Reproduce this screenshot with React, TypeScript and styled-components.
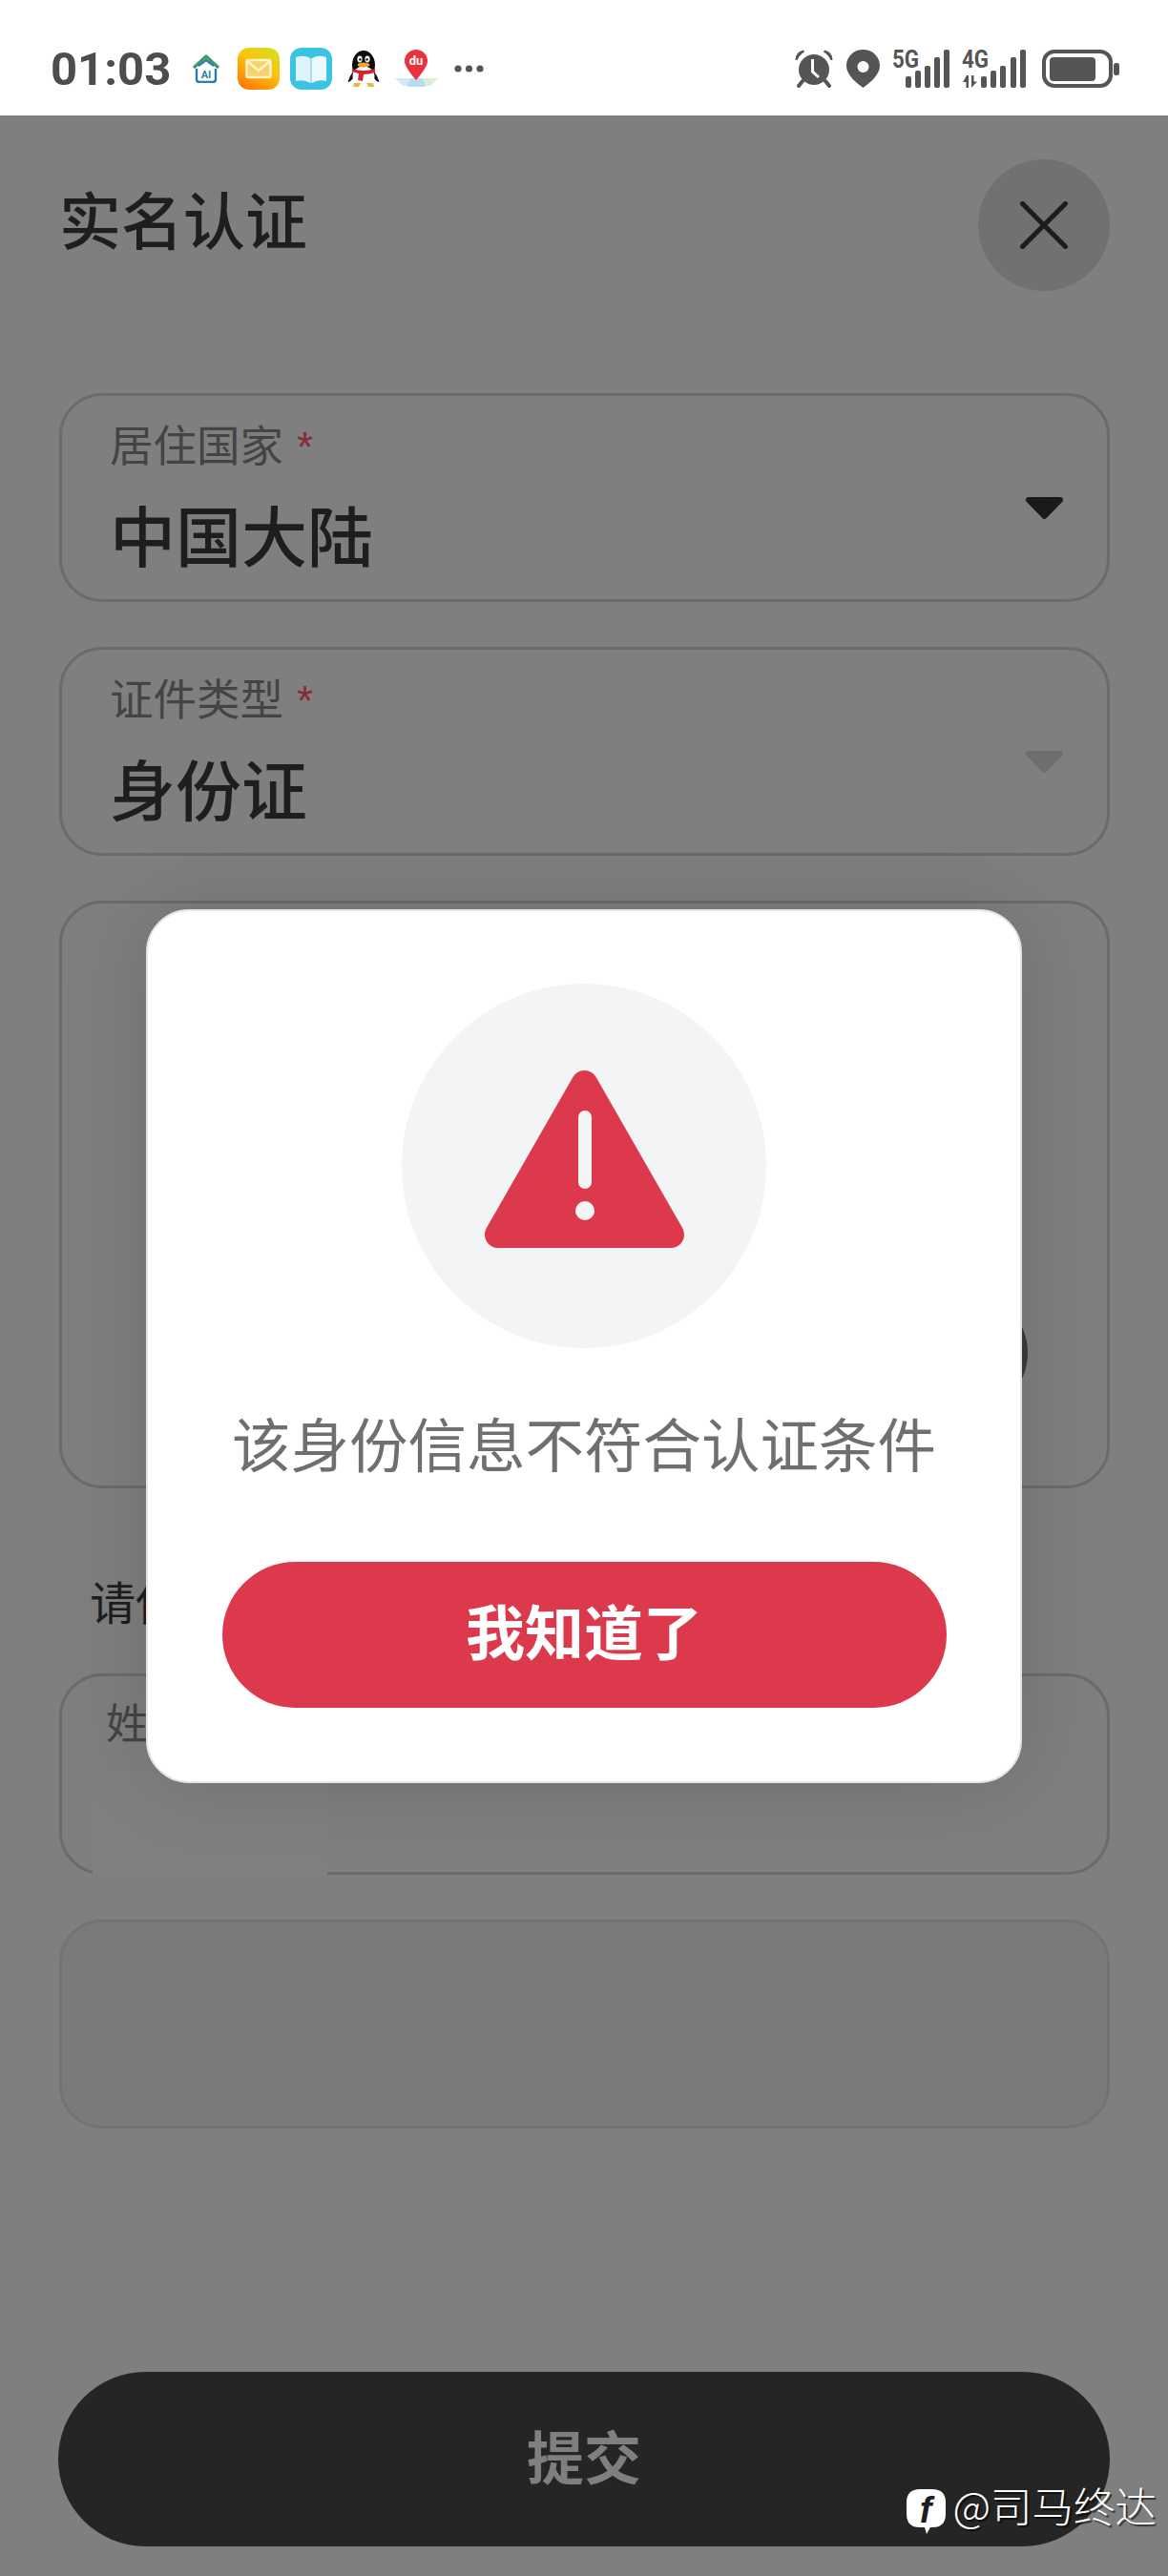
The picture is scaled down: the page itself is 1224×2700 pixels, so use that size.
import styled, { createGlobalStyle } from 'styled-components'

const GlobalStyle = createGlobalStyle`
  html, body {
    margin: 0;
    padding: 0;
    background: #7f7f7f;
    font-family: 'Noto Sans CJK SC', 'Noto Sans', sans-serif;
  }
  * {
    box-sizing: border-box;
  }
`

const StatusIcons = () => (
  <>
    <StatusGlyph $w={30} $gap={22} width="30" height="30" viewBox="0 0 30 30">
      <path d="M2 14 L15 2 L28 14" fill="none" stroke="#3f9a62" strokeWidth="3.2" strokeLinejoin="round" />
      <path d="M7 12 L15 6 L23 12" fill="none" stroke="#2f7fb0" strokeWidth="2.4" />
      <path d="M5 15 V26 Q5 29 8 29 H22 Q25 29 25 26 V15" fill="none" stroke="#2b7ea8" strokeWidth="2.4" />
      <text x="15" y="25" textAnchor="middle" fontFamily="Roboto, sans-serif" fontWeight="700" fontSize="11" fill="#2b7ea8">
        AI
      </text>
    </StatusGlyph>
    <StatusGlyph $w={44} $gap={18} width="44" height="44" viewBox="0 0 44 44">
      <defs>
        <linearGradient id="mailBg" x1="0.85" y1="0" x2="0.25" y2="1">
          <stop offset="0" stopColor="#d4df20" />
          <stop offset="0.45" stopColor="#fcc30c" />
          <stop offset="1" stopColor="#ff7a06" />
        </linearGradient>
      </defs>
      <rect width="44" height="44" rx="12" fill="url(#mailBg)" />
      <rect x="9.5" y="13" width="25" height="18" rx="1.5" fill="#f6d36a" stroke="#fff2c4" strokeWidth="2.6" />
      <path d="M10 14 L22 24 L34 14" fill="none" stroke="#fff2c4" strokeWidth="2.6" />
    </StatusGlyph>
    <StatusGlyph $w={44} $gap={11} width="44" height="44" viewBox="0 0 44 44">
      <rect width="44" height="44" rx="12" fill="#3bc3e3" />
      <path d="M6 10 Q15 7 21 11 V37 Q15 33 6 35 Z" fill="#dff3fb" />
      <path d="M38 10 Q29 7 23 11 V37 Q29 33 38 35 Z" fill="#eef9fd" />
      <path d="M21 11 H23 V37 H21 Z" fill="#a9def2" />
    </StatusGlyph>
    <StatusGlyph $w={34} $gap={16} width="34" height="39" viewBox="0 0 34 39">
      <path d="M6 22 Q2 27 0.5 33 Q3 33 6 29 Z M28 22 Q32 27 33.5 33 Q31 33 28 29 Z" fill="#111" />
      <ellipse cx="17" cy="15" rx="12" ry="15" fill="#0c0c0c" />
      <ellipse cx="17" cy="27" rx="11.5" ry="10.5" fill="#fff" />
      <path d="M7 34 H14 L12 38 H6 Z M20 34 H27 L28 38 H22 Z" fill="#e8b93c" />
      <ellipse cx="13" cy="9" rx="2.6" ry="3.4" fill="#fff" />
      <ellipse cx="21" cy="9" rx="2.6" ry="3.4" fill="#fff" />
      <circle cx="13.4" cy="9.4" r="1.2" fill="#000" />
      <circle cx="20.6" cy="9.4" r="1.2" fill="#000" />
      <ellipse cx="17" cy="15" rx="6.5" ry="2.6" fill="#f0a52c" />
      <path d="M5 19 Q17 23 29 19 L29 23 Q22 25 17 25 L16 32 L11 31 L12 24 Q8 23 5 22 Z" fill="#d8222c" />
    </StatusGlyph>
    <StatusGlyph $w={45} $gap={16} width="45" height="40" viewBox="0 0 45 40">
      <path d="M0 30 H15 L22 38 H8 Z" fill="#cfe9f6" />
      <path d="M30 30 H45 L37 38 H28 Z" fill="#dcefd6" />
      <path d="M16 30 H29 L32 39 H13 Z" fill="#b9dcf3" />
      <path d="M22 32 Q10 18 10 12 A12 12 0 0 1 34 12 Q34 18 22 32 Z" fill="#e8323c" />
      <text x="22" y="16" textAnchor="middle" fontFamily="Roboto, sans-serif" fontWeight="700" fontSize="13" fill="#fff">
        du
      </text>
    </StatusGlyph>
    <StatusGlyph $w={31} $gap={17} width="31" height="10" viewBox="0 0 31 10">
      <circle cx="4" cy="5" r="3.6" fill="#555" />
      <circle cx="15.5" cy="5" r="3.6" fill="#555" />
      <circle cx="27" cy="5" r="3.6" fill="#555" />
    </StatusGlyph>
  </>
)

const barHeights = [12, 18, 23, 32, 40]

const Signal = ({ label, width, bars, arrows }: { label: string; width: number; bars: number[]; arrows?: boolean }) => (
  <SignalBlock $w={width} $gap={arrows ? 12 : 13}>
    <SignalLabel>{label}</SignalLabel>
    <svg width={width} height="40" viewBox={`0 0 ${width} 40`}>
      {arrows && <path d="M5 27 L1 34 H4.5 V40 H7 V27 Z M10 40 L16 33.5 H12.5 V27 H10 Z" fill="#555" />}
      {bars.map((x, i) => (
        <rect key={x} x={x} y={40 - barHeights[i]} width="6" height={barHeights[i]} rx="2" fill="#555" />
      ))}
    </svg>
  </SignalBlock>
)

const SystemIcons = () => (
  <>
    <StatusGlyph $w={40} $gap={0} width="40" height="40" viewBox="0 0 40 40">
      <path d="M0.5 11 Q0 3 9 0.5 L10 2.5 Q5 5 2.5 11 Z M39.5 11 Q40 3 31 0.5 L30 2.5 Q35 5 37.5 11 Z" fill="#555" />
      <path d="M8 33 L4 38 M32 33 L36 38" stroke="#555" strokeWidth="4" strokeLinecap="round" />
      <circle cx="20" cy="21" r="16" fill="#555" />
      <path d="M18.5 10 V23 L25 29" fill="none" stroke="#fff" strokeWidth="3" />
    </StatusGlyph>
    <StatusGlyph $w={35} $gap={14} width="35" height="40" viewBox="0 0 35 40">
      <path d="M17.5 0 C27.5 0 35 7.5 35 17 C35 27 24 35 17.5 40 C11 35 0 27 0 17 C0 7.5 7.5 0 17.5 0 Z" fill="#555" />
      <circle cx="17.5" cy="18" r="6" fill="#fff" />
    </StatusGlyph>
    <Signal label="5G" width={61} bars={[14, 24, 34, 44, 54]} />
    <Signal label="4G" width={67} bars={[20, 30, 40, 51, 61]} arrows />
    <StatusGlyph $w={81} $gap={17} width="81" height="40" viewBox="0 0 81 40">
      <rect x="2" y="2" width="70" height="36" rx="11" fill="none" stroke="#555" strokeWidth="4" />
      <rect x="8" y="8" width="48" height="25" rx="4" fill="#555" />
      <rect x="75" y="14" width="6" height="13" rx="2.5" fill="#555" />
    </StatusGlyph>
  </>
)

const SelectArrow = ({ $muted }: { $muted?: boolean }) => (
  <ArrowIcon width="41" height="25" viewBox="0 0 41 25">
    <path
      d="M4 4 H37 L20.5 21 Z"
      fill={$muted ? '#6e6e6e' : '#1a1a1a'}
      stroke={$muted ? '#6e6e6e' : '#1a1a1a'}
      strokeWidth="6"
      strokeLinejoin="round"
    />
  </ArrowIcon>
)

const WarningIcon = () => (
  <svg width="209" height="186" viewBox="0 0 209 186">
    <path d="M104.5 14 L14 172 H195 Z" fill="#dc3a4c" stroke="#dc3a4c" strokeWidth="28" strokeLinejoin="round" />
    <rect x="98" y="42" width="14" height="82" rx="7" fill="#f3f4f6" />
    <circle cx="105" cy="147" r="10" fill="#f3f4f6" />
  </svg>
)

const App = () => {
  return (
    <Page>
      <GlobalStyle />
      <StatusBar>
        <StatusGroup>
          <Clock>01:03</Clock>
          <StatusIcons />
        </StatusGroup>
        <StatusGroup>
          <SystemIcons />
        </StatusGroup>
      </StatusBar>

      <Main>
        <Header>
          <Title>实名认证</Title>
          <CloseButton>
            <svg width="50" height="50" viewBox="0 0 50 50">
              <path d="M2.5 2.5 L47.5 47.5 M47.5 2.5 L2.5 47.5" stroke="#1c1c1c" strokeWidth="5" strokeLinecap="round" />
            </svg>
          </CloseButton>
        </Header>

        <Card>
          <FieldText>
            <FieldLabel>
              居住国家<Star>*</Star>
            </FieldLabel>
            <FieldValue>中国大陆</FieldValue>
          </FieldText>
          <SelectArrow />
        </Card>

        <Card>
          <FieldText>
            <FieldLabel>
              证件类型<Star>*</Star>
            </FieldLabel>
            <FieldValue>身份证</FieldValue>
          </FieldText>
          <SelectArrow $muted />
        </Card>

        <UploadCard>
          <UploadBadge />
        </UploadCard>

        <Hint>请使用本人证件</Hint>

        <NameCard>
          <NameLabel>姓名</NameLabel>
          <Smudge />
        </NameCard>

        <DisabledCard />

        <SubmitButton>
          <ButtonText>提交</ButtonText>
        </SubmitButton>

        <Overlay>
          <Dialog>
            <IconCircle>
              <WarningIcon />
            </IconCircle>
            <Message>该身份信息不符合认证条件</Message>
            <ConfirmButton>
              <ButtonText>我知道了</ButtonText>
            </ConfirmButton>
          </Dialog>
        </Overlay>

        <Watermark>
          <svg width="41" height="47" viewBox="0 0 41 47">
            <path
              d="M14 0 H27 Q41 0 41 14 V26 Q41 40 27 40 H25 L21 47 L19 40 H14 Q0 40 0 26 V14 Q0 0 14 0 Z"
              fill="#fff"
            />
            <text x="20" y="35" textAnchor="middle" fontFamily="'Liberation Sans', sans-serif" fontStyle="italic" fontWeight="700" fontSize="38" fill="#1d1d1d">
              f
            </text>
          </svg>
          <WatermarkText>@司马终达</WatermarkText>
        </Watermark>
      </Main>
    </Page>
  )
}

const Page = styled.div`
  width: 1224px;
  height: 2700px;
  display: flex;
  flex-direction: column;
  overflow: hidden;
`

const StatusBar = styled.div`
  height: 121px;
  flex: none;
  padding: 23px 51px 0 53px;
  background: #fff;
  display: flex;
  align-items: center;
  justify-content: space-between;
`

const StatusGroup = styled.div`
  display: flex;
  align-items: center;
`

const StatusGlyph = styled.svg<{ $w: number; $gap: number }>`
  flex: none;
  width: ${(p) => p.$w}px;
  margin-left: ${(p) => p.$gap}px;
`

const SignalBlock = styled.div<{ $w: number; $gap: number }>`
  position: relative;
  flex: none;
  width: ${(p) => p.$w}px;
  height: 40px;
  margin-left: ${(p) => p.$gap}px;
  display: flex;
`

const SignalLabel = styled.span`
  position: absolute;
  top: -1px;
  left: 0;
  font-family: Roboto, sans-serif;
  font-weight: 700;
  font-size: 26px;
  line-height: 22px;
  color: #555;
  transform: scaleX(0.86);
  transform-origin: left center;
`

const Clock = styled.span`
  font-family: Roboto, sans-serif;
  font-weight: 700;
  font-size: 49px;
  line-height: 1;
  color: #4d4d4d;
`

const Main = styled.div`
  position: relative;
  flex: 1;
  padding: 46px 61px 31px 62px;
  background: #7f7f7f;
  display: flex;
  flex-direction: column;
`

const Header = styled.div`
  height: 138px;
  margin-bottom: 107px;
  display: flex;
  align-items: center;
  justify-content: space-between;
`

const Title = styled.h1`
  margin: 0 0 16px 0;
  font-size: 65px;
  font-weight: 500;
  line-height: 1;
  color: #1e1e1e;
`

const CloseButton = styled.div`
  width: 138px;
  height: 138px;
  border-radius: 50%;
  background: #707173;
  display: flex;
  align-items: center;
  justify-content: center;
`

const Card = styled.div`
  height: 219px;
  margin-bottom: 47px;
  padding: 26px 45px 0 50px;
  border: 3px solid #6b6b6b;
  border-radius: 45px;
  display: flex;
  justify-content: space-between;
  align-items: flex-start;
`

const FieldText = styled.div`
  display: flex;
  flex-direction: column;
  gap: 33px;
`

const FieldLabel = styled.div`
  font-size: 45.5px;
  line-height: 46px;
  color: #444;
`

const Star = styled.span`
  margin-left: 14px;
  font-family: 'Liberation Sans', sans-serif;
  font-size: 44px;
  color: #8a2a35;
`

const FieldValue = styled.div`
  font-size: 69px;
  font-weight: 500;
  line-height: 69px;
  color: #1e1e1e;
`

const ArrowIcon = styled.svg`
  flex: none;
  margin-top: 79px;
`

const UploadCard = styled.div`
  height: 616px;
  padding-right: 83px;
  border: 3px solid #6b6b6b;
  border-radius: 45px;
  display: flex;
  justify-content: flex-end;
  align-items: flex-end;
`

const UploadBadge = styled.div`
  width: 128px;
  height: 128px;
  margin-bottom: 75px;
  border-radius: 50%;
  background: #3b3b3b;
`

const Hint = styled.div`
  margin: 92px 0 51px 32px;
  font-size: 48px;
  line-height: 51px;
  white-space: nowrap;
  color: #1e1e1e;
`

const NameCard = styled.div`
  position: relative;
  height: 211px;
  margin-bottom: 47px;
  padding: 24px 0 0 46px;
  border: 3px solid #6b6b6b;
  border-radius: 45px;
`

const NameLabel = styled.div`
  font-size: 44px;
  line-height: 46px;
  color: #444;
`

const Smudge = styled.div`
  position: absolute;
  left: 32px;
  bottom: -4px;
  width: 246px;
  height: 110px;
  background: #808080;
`

const DisabledCard = styled.div`
  height: 219px;
  border: 3px solid #737373;
  border-radius: 45px;
  background: linear-gradient(90deg, #7a7b79 0%, #7c7b79 35%, #797b79 45%, #797b79 100%);
`

const SubmitButton = styled.div`
  height: 183px;
  margin-top: auto;
  margin-left: -1px;
  border-radius: 92px;
  background: #252525;
  display: flex;
  align-items: center;
  justify-content: center;
  font-size: 60px;
  font-weight: 700;
  color: #7f7f7f;
`

const ButtonText = styled.span`
  margin-bottom: 10px;
`

const Overlay = styled.div`
  position: absolute;
  inset: 0;
  display: flex;
  align-items: center;
  justify-content: center;
`

const Dialog = styled.div`
  width: 918px;
  height: 916px;
  padding-top: 76px;
  border: 2px solid #e4e4e4;
  border-radius: 45px;
  background: #fff;
  box-shadow: 0 0 90px rgba(0, 0, 0, 0.14);
  display: flex;
  flex-direction: column;
  align-items: center;
`

const IconCircle = styled.div`
  width: 382px;
  height: 382px;
  flex: none;
  padding-bottom: 14px;
  border-radius: 50%;
  background: #f3f4f6;
  display: flex;
  align-items: center;
  justify-content: center;
`

const Message = styled.div`
  margin: 68px 0 3px;
  font-size: 61.5px;
  line-height: 61px;
  white-space: nowrap;
  color: #6f6f6f;
`

const ConfirmButton = styled.div`
  width: 759px;
  height: 153px;
  margin-top: 92px;
  border-radius: 77px;
  background: #dc3a4c;
  display: flex;
  align-items: center;
  justify-content: center;
  font-size: 62px;
  font-weight: 700;
  color: #fff;
`

const Watermark = styled.div`
  position: absolute;
  right: 12px;
  bottom: 44px;
  display: flex;
  align-items: flex-start;
  gap: 7px;
`

const WatermarkText = styled.span`
  margin-top: -6px;
  font-size: 43.5px;
  line-height: 46px;
  font-weight: 300;
  color: #fff;
  white-space: nowrap;
  text-shadow: 2px 2px 1px rgba(0, 0, 0, 0.6);
`

export default App
